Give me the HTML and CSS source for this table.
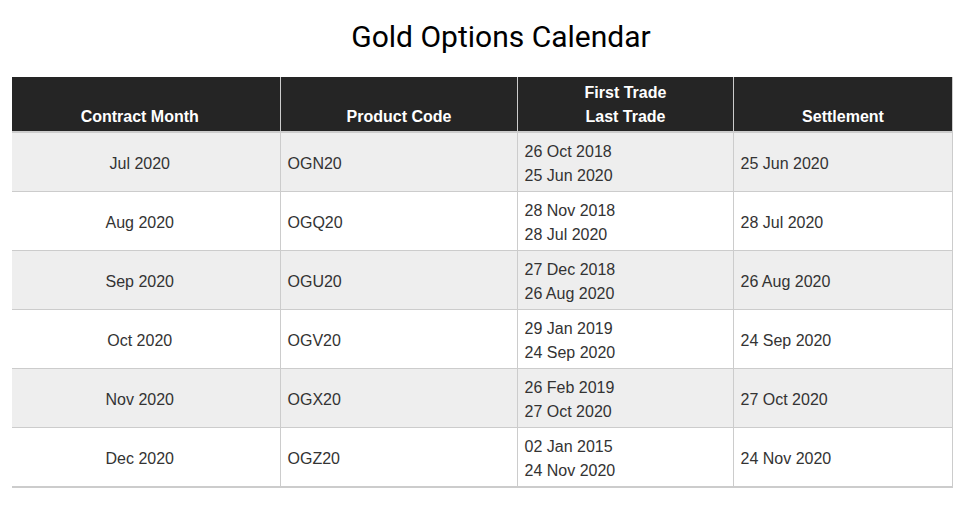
FILE: index.html
```html
<!DOCTYPE html>
<html>
<head>
<meta charset="utf-8">
<link rel="stylesheet" href="styles.css">
</head>
<body>
<h1 class="title">Gold Options Calendar</h1>
<table class="cal">
  <colgroup>
    <col class="c1"><col class="c2"><col class="c3"><col class="c4">
  </colgroup>
  <thead>
    <tr>
      <th class="first">Contract Month</th>
      <th>Product Code</th>
      <th>First Trade<br>Last Trade</th>
      <th>Settlement</th>
    </tr>
  </thead>
  <tbody>
    <tr><td class="first">Jul 2020</td><td>OGN20</td><td>26 Oct 2018<br>25 Jun 2020</td><td>25 Jun 2020</td></tr>
    <tr><td class="first">Aug 2020</td><td>OGQ20</td><td>28 Nov 2018<br>28 Jul 2020</td><td>28 Jul 2020</td></tr>
    <tr><td class="first">Sep 2020</td><td>OGU20</td><td>27 Dec 2018<br>26 Aug 2020</td><td>26 Aug 2020</td></tr>
    <tr><td class="first">Oct 2020</td><td>OGV20</td><td>29 Jan 2019<br>24 Sep 2020</td><td>24 Sep 2020</td></tr>
    <tr><td class="first">Nov 2020</td><td>OGX20</td><td>26 Feb 2019<br>27 Oct 2020</td><td>27 Oct 2020</td></tr>
    <tr><td class="first">Dec 2020</td><td>OGZ20</td><td>02 Jan 2015<br>24 Nov 2020</td><td>24 Nov 2020</td></tr>
  </tbody>
</table>
</body>
</html>
```
FILE: styles.css
```css
html, body { margin: 0; padding: 0; background: #fff; }
body { padding: 0 17px 0 12px; font-family: "Liberation Sans", Arial, sans-serif; color: #333; }
.title {
  margin: 0;
  padding-top: 19px;
  padding-left: 38px;
  height: 77px;
  box-sizing: border-box;
  font-family: Roboto, "Liberation Sans", sans-serif;
  font-weight: 400;
  font-size: 30px;
  line-height: 36px;
  text-align: center;
  color: #000;
}
.cal {
  width: 940px;
  border-collapse: collapse;
  table-layout: fixed;
  font-size: 16px;
  line-height: 24px;
  border-bottom: 2px solid #ccc;
}
.c1 { width: 268px; }
.c2 { width: 237px; }
.c3 { width: 216px; }
.c4 { width: 219px; }
.cal th {
  background: #252525;
  color: #fff;
  font-family: "Liberation Sans", Arial, sans-serif;
  font-weight: 700;
  font-size: 16px;
  line-height: 24px;
  text-align: center;
  vertical-align: bottom;
  padding: 4px 6px 2px 7px;
  border-right: 1px solid #ccc;
  border-bottom: 2px solid #ccc;
}
.cal td {
  padding: 7px 6px 3px 7px;
  border-right: 1px solid #ccc;
  border-bottom: 1px solid #ccc;
  text-align: left;
  vertical-align: middle;
}
.cal .first { padding-left: 6px; padding-right: 18px; text-align: center; }
.cal tbody tr:nth-child(odd) td { background: #eee; }
.cal tbody tr:nth-child(even) td { background: #fff; }
```
